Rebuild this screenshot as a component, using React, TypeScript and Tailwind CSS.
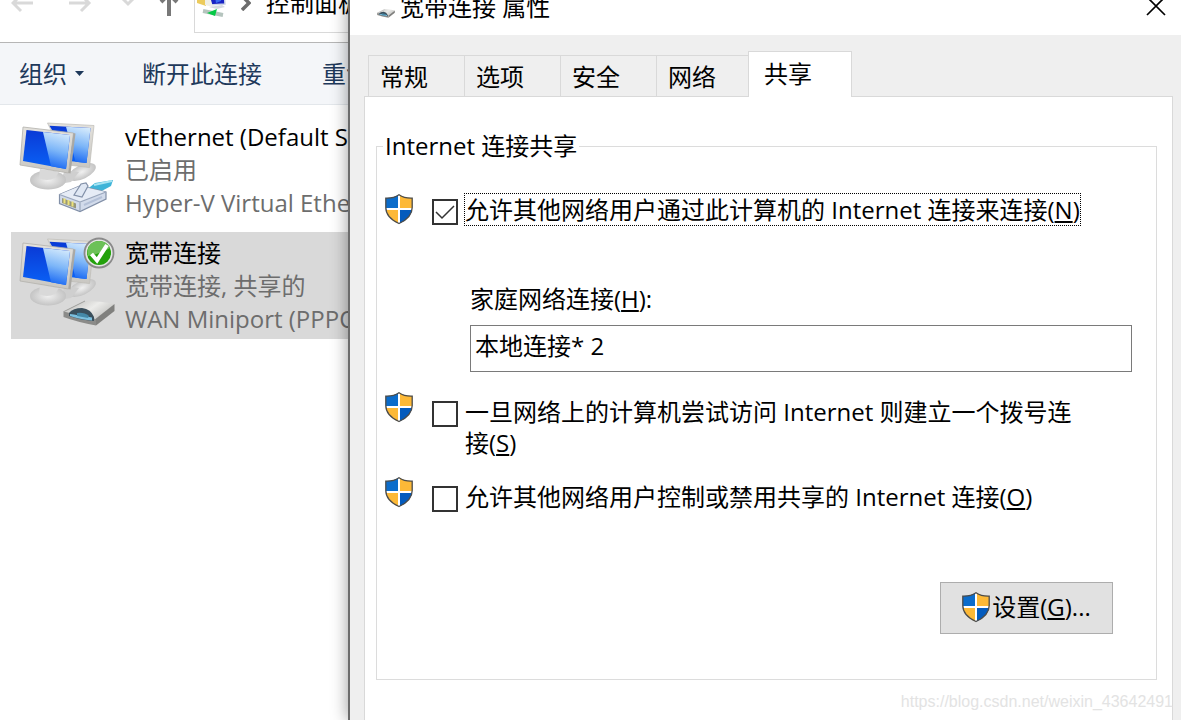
import type { ReactNode } from "react";

function Shield() {
  return (
    <svg viewBox="0 0 28 32" className="h-8 w-7 shrink-0" aria-hidden="true">
      <defs>
        <clipPath id="shield-shape">
          <path d="M14 1.5C10.500 4 5 5.200 .8 5v9.500c0 7 5 12.500 13.200 16.300 8.200-3.800 13.200-9.300 13.200-16.300V5C23 5.200 17.500 4 14 1.500z" />
        </clipPath>
      </defs>
      <g clipPath="url(#shield-shape)">
        <rect width="14" height="16" fill="#0b6ccb" />
        <rect x="14" width="14" height="16" fill="#fdb937" />
        <rect y="16" width="14" height="16" fill="#fdb937" />
        <rect x="14" y="16" width="14" height="16" fill="#045bbd" />
        <path d="M14 0v32M0 16h28" stroke="#fff" strokeWidth="2" />
      </g>
      <path
        d="M14 1.700C10.500 4.100 5 5.300 .8 5.100v9.400c0 7 5 12.300 13.200 16 8.200-3.700 13.200-9 13.200-16V5.100C23 5.300 17.500 4.100 14 1.700z"
        fill="none"
        stroke="#4c4c4a"
        strokeWidth="1.300"
      />
    </svg>
  );
}

function Monitors() {
  return (
    <>
      <defs>
        <linearGradient id="screen" x1="0" y1="0" x2="0" y2="1">
          <stop offset="0" stopColor="#0a3ad6" />
          <stop offset="1" stopColor="#0a62f6" />
        </linearGradient>
        <linearGradient id="glare" x1="0.6" y1="0" x2="0.4" y2="1">
          <stop offset="0" stopColor="#d3e9fc" />
          <stop offset="0.5" stopColor="#7db6f8" />
          <stop offset="1" stopColor="#1565f3" />
        </linearGradient>
        <linearGradient id="frame" x1="0" y1="0" x2="0" y2="1">
          <stop offset="0" stopColor="#e4e2dd" />
          <stop offset="1" stopColor="#c9c7c2" />
        </linearGradient>
        <radialGradient id="foot">
          <stop offset="0" stopColor="#f0f0f0" />
          <stop offset="1" stopColor="#c4c4c4" />
        </radialGradient>
      </defs>
      <ellipse cx="63" cy="52" rx="15" ry="7" fill="url(#foot)" transform="rotate(-26 63 52)" />
      <path d="M46 50l14 2-8 10-12 2z" fill="#cfcfcf" />
      <path d="M28.500 3l46.500 2.500-4.500 42L49 45z" fill="url(#frame)" stroke="#bdbbb6" strokeWidth="0.700" />
      <path d="M30.500 5.800L71.500 8l-4 35-17-2z" fill="url(#screen)" />
      <path d="M47 6.700L71.500 8l-4 35-11-1.300z" fill="url(#glare)" />
      <ellipse cx="29" cy="60" rx="18" ry="9.500" fill="url(#foot)" />
      <path d="M21 49l19 3-4 6q-8 4-16 0z" fill="#d9d9d9" />
      <path d="M4 7l50.500 6L49.500 53 1 45z" fill="url(#frame)" stroke="#b3b1ac" strokeWidth="0.800" />
      <path d="M54.500 13l2 .5-5 40-2-.5z" fill="#aaa8a3" />
      <path d="M7.500 10L51 15l-4 34-43-8z" fill="url(#screen)" />
      <path d="M24 11.900L51 15l-4 34-15-2.800z" fill="url(#glare)" />
    </>
  );
}

function EthernetIcon() {
  return (
    <svg viewBox="0 0 96 96" className="h-24 w-24 shrink-0" aria-hidden="true">
      <Monitors />
      <path d="M66 71l10-8 18-3-2 6-13 7-8 1z" fill="#3fb4d8" />
      <path d="M75 65l18-4" stroke="#a8e4f2" strokeWidth="2" />
      <path d="M40.500 74.500L61 66l26 6v7L61 91.500l-20.500-8z" fill="#d2dbeb" stroke="#8290a8" strokeWidth="1.200" />
      <path d="M40.500 74.500L61 66l26 6-26 11z" fill="#e6ecf6" />
      <path d="M40.500 74.500L61 82l26-10M61 82v9" fill="none" stroke="#9aa7bd" strokeWidth="1.200" />
      <path d="M55 75l7-11 5-1 2 3-6 11z" fill="#dfe7f3" stroke="#8290a8" strokeWidth="1.200" />
      <path d="M43 78l14 5.500v5L43 83z" fill="#98987c" />
      <path d="M45.500 78.500v5M49.500 80v5M53.500 81.500v5" stroke="#ece27a" strokeWidth="2" />
      <path d="M65 85l18-8" stroke="#b4c1d8" strokeWidth="2" />
    </svg>
  );
}

function ModemShape() {
  return (
    <>
      <defs>
        <linearGradient id="modem-top" x1="0" y1="0" x2="1" y2="0.500">
          <stop offset="0" stopColor="#b4b4b2" />
          <stop offset="0.600" stopColor="#ececea" />
          <stop offset="1" stopColor="#c4c4c2" />
        </linearGradient>
      </defs>
      <path d="M.5 11L33 18v7.500Q14 22 .5 17z" fill="#8b8b89" />
      <path d="M.5 11.500L22 1q16 0 29.500 3L33 19z" fill="url(#modem-top)" />
      <path d="M33 18.500L51.500 4v7L33 25.500z" fill="#80807e" />
      <path d="M6 13q4-5 13-5 9 1 12 9v4Q17 20 6 16z" fill="#3a4f5c" />
      <path d="M7 14q7 1 22 3.500v3Q16 19 7 16z" fill="#7cc0df" />
      <path d="M14 13q7-1 12 3l-1 2-11-2z" fill="#4589a8" />
      <path d="M1 11.500L22 1" stroke="#8f8f8d" strokeWidth="0.800" />
    </>
  );
}

function BroadbandIcon() {
  return (
    <svg viewBox="0 0 96 96" className="h-24 w-24 shrink-0" aria-hidden="true">
      <Monitors />
      <svg x="44" y="64" width="52" height="26" viewBox="0 0 52 26">
        <ModemShape />
      </svg>
      <circle cx="80" cy="17" r="14.500" fill="#e6e6e6" stroke="#8a8a8a" strokeWidth="1.800" />
      <circle cx="80" cy="17" r="12" fill="#23a10c" />
      <path d="M68.500 14a12 12 0 0 1 22.500-2q-8 5-22 8-1-3-.5-6z" fill="#6cc158" />
      <path d="M72.500 18l5.500 6.500L88 9" fill="none" stroke="#fff" strokeWidth="4" />
    </svg>
  );
}

function NavBar() {
  return (
    <div className="-mt-[36px] flex h-[79px] shrink-0 items-center border-b border-[#b6b6b6] bg-white">
      <button aria-label="后退" className="ml-[11px] w-6 text-[#d9d9d9]">
        <svg viewBox="0 0 24 20" className="h-5 w-6" fill="none" stroke="currentColor" strokeWidth="3">
          <path d="M22 10H2M10 2l-8 8 8 8" />
        </svg>
      </button>
      <button aria-label="前进" className="ml-[33px] w-6 text-[#d9d9d9]">
        <svg viewBox="0 0 24 20" className="h-5 w-6" fill="none" stroke="currentColor" strokeWidth="3">
          <path d="M1 10h20M13 2l8 8-8 8" />
        </svg>
      </button>
      <button aria-label="最近浏览的位置" className="ml-[29px] w-[14px] text-[#d9d9d9]">
        <svg viewBox="0 0 14 10" className="h-[10px] w-[14px]" fill="none" stroke="currentColor" strokeWidth="3">
          <path d="M2 1l5 5 5-5" />
        </svg>
      </button>
      <button aria-label="上移" className="ml-6 w-[20px] text-[#787878]">
        <svg viewBox="0 0 20 26" className="h-[26px] w-[20px]" fill="none" stroke="currentColor" strokeWidth="4">
          <path d="M10 26V4M2 12l8-8 8 8" />
        </svg>
      </button>
      <div className="ml-[15px] flex h-[60px] w-[400px] shrink-0 items-center border border-[#d9d9d9] pl-[2px]">
        <svg viewBox="0 0 30 30" className="h-[30px] w-[30px] shrink-0" aria-hidden="true">
          <path d="M10 2h17l1 14-15 1z" fill="#1823c4" stroke="#cdd5e6" strokeWidth="1.500" />
          <path d="M17 2l9 1-2 10-5 2z" fill="#3b6bf0" />
          <path d="M0 6l9 3v9l-9-3z" fill="#eccb5c" />
          <path d="M8 10l6 2 2 7-8-2z" fill="#efefe6" />
          <path d="M12 19l13-2 3 2-8 2z" fill="#d5dae0" />
          <path d="M6 23l20 4" stroke="#b5c4be" strokeWidth="4" />
          <path d="M10 25l10-4-2 7z" fill="#05c946" />
        </svg>
        <svg viewBox="0 0 10 16" className="ml-[14px] h-4 w-[10px]" fill="none" stroke="#6d6d6d" strokeWidth="3.500">
          <path d="M1 1l7 7-7 7" />
        </svg>
        <span className="ml-[15px] whitespace-nowrap leading-8">控制面板</span>
      </div>
    </div>
  );
}

function CommandBar() {
  return (
    <div className="flex h-[62px] shrink-0 items-center whitespace-nowrap border-b border-[#e3e7eb] bg-[#f4f6f9] pl-[19px] text-[#1e395b]">
      <button className="flex items-center gap-2">
        组织
        <svg viewBox="0 0 9 5" className="h-[5px] w-[9px]" fill="currentColor" aria-hidden="true">
          <path d="M0 0h9L4.500 5z" />
        </svg>
      </button>
      <button className="ml-[58px]">断开此连接</button>
      <button className="ml-[60px]">重命名此连接</button>
    </div>
  );
}

type ConnectionProps = { icon: ReactNode; name: string; status: string; device: string; selected?: boolean };

function Connection({ icon, name, status, device, selected }: ConnectionProps) {
  return (
    <li className={`flex h-[107px] gap-[10px] pl-2 pt-1 ${selected ? "bg-[#d9d9d9]" : ""}`}>
      {icon}
      <div className="whitespace-nowrap leading-[33px] text-[#6d6d6d]">
        <p className="text-black">{name}</p>
        <p>{status}</p>
        <p>{device}</p>
      </div>
    </li>
  );
}

const tabs = ["常规", "选项", "安全", "网络"];

type OptionProps = { id: string; checked?: boolean; focused?: boolean; hotkey: string; children: ReactNode };

function Option({ id, checked, focused, hotkey, children }: OptionProps) {
  return (
    <div className="flex items-start pl-2 pr-16">
      <Shield />
      <div className={`ml-[19px] flex items-start gap-[6px] ${focused ? "" : "pt-1"}`}>
        <span className="mt-[6px] grid shrink-0">
          <input
            id={id}
            type="checkbox"
            defaultChecked={checked}
            className="peer col-start-1 row-start-1 h-[26px] w-[26px] appearance-none border-2 border-[#333] bg-white"
          />
          <svg
            viewBox="0 0 26 26"
            className="pointer-events-none invisible col-start-1 row-start-1 h-[26px] w-[26px] peer-checked:visible"
            fill="none"
            stroke="#333"
            strokeWidth="1.500"
            aria-hidden="true"
          >
            <path d="M4 13l6 6L22 7" />
          </svg>
        </span>
        <label
          htmlFor={id}
          className={`border leading-[31px] ${focused ? "whitespace-nowrap border-dotted border-black" : "border-transparent"}`}
        >
          {children}(<u className="underline-offset-2">{hotkey}</u>)
        </label>
      </div>
    </div>
  );
}

function PropertiesDialog() {
  return (
    <section className="relative z-10 flex min-w-0 flex-1 flex-col border-l-2 border-[#6b6b6b] bg-[#efefef] shadow-[0_0_16px_rgba(0,0,0,0.4)]">
      <header className="-mt-[21px] flex h-[56px] shrink-0 items-center bg-white pl-[27px] pr-[14px]">
        <svg viewBox="0 0 52 26" className="mt-3 h-[9px] w-[18px]" aria-hidden="true">
          <ModemShape />
        </svg>
        <h1 className="ml-[5px] flex-1 leading-8">宽带连接 属性</h1>
        <button aria-label="关闭">
          <svg viewBox="0 0 22 22" className="h-[22px] w-[22px]" fill="none" stroke="#000" strokeWidth="1.700">
            <path d="M2 1l18 18M20 1L2 19" />
          </svg>
        </button>
      </header>
      <div role="tablist" className="z-10 -mb-px ml-[18px] mt-4 flex h-[46px] shrink-0 items-end">
        {tabs.map((tab) => (
          <button
            key={tab}
            role="tab"
            aria-selected="false"
            className="h-[42px] w-24 border-b border-l border-t border-[#d9d9d9] pl-[11px] pt-[2px] text-left"
          >
            {tab}
          </button>
        ))}
        <div className="-ml-1 h-[46px] w-[104px] border-x border-t border-[#d9d9d9] bg-white">
          <button role="tab" aria-selected="true" className="h-full w-full pb-[2px] pl-[15px] text-left">
            共享
          </button>
        </div>
      </div>
      <main className="ml-[14px] mr-2 flex-1 border-x border-t border-[#d9d9d9] bg-white pl-[11px] pr-[15px] pt-[33px]">
        <fieldset className="border border-[#dcdcdc] pb-[45px]">
          <legend className="ml-[6px] px-[2px] leading-8">Internet 连接共享</legend>
          <div className="pt-[31px]">
            <Option id="share" checked focused hotkey="N">
              允许其他网络用户通过此计算机的 Internet 连接来连接
            </Option>
          </div>
          <div className="ml-[93px] mr-6 mt-[57px]">
            <label htmlFor="home" className="block leading-8">
              家庭网络连接(<u className="underline-offset-2">H</u>):
            </label>
            <input
              id="home"
              type="text"
              readOnly
              value="本地连接* 2"
              className="mt-[10px] block h-[47px] w-full border border-[#7a7a7a] bg-white pb-2 pl-1 outline-none"
            />
          </div>
          <div className="mt-[19px] flex flex-col gap-[17px]">
            <Option id="dial" hotkey="S">
              一旦网络上的计算机尝试访问 Internet 则建立一个拨号连接
            </Option>
            <Option id="control" hotkey="O">
              允许其他网络用户控制或禁用共享的 Internet 连接
            </Option>
          </div>
          <div className="mr-[43px] mt-[69px] flex justify-end">
            <button className="flex h-[52px] w-[173px] items-center justify-center gap-[2px] border border-[#adadad] bg-[#e1e1e1] pb-[2px]">
              <Shield />
              <span>
                设置(<u className="underline-offset-2">G</u>)...
              </span>
            </button>
          </div>
        </fieldset>
      </main>
      <p className="absolute bottom-2 right-2 font-['Liberation_Sans',sans-serif] text-base leading-5 text-[#e3e3e3]">
        https://blog.csdn.net/weixin_43642491
      </p>
    </section>
  );
}

export default function App() {
  return (
    <div className="flex h-screen overflow-hidden bg-white font-['Open_Sans','Noto_Sans_CJK_SC',sans-serif] text-2xl text-black">
      <section className="flex w-[348px] shrink-0 flex-col overflow-hidden">
        <NavBar />
        <CommandBar />
        <ul className="ml-[11px] mt-[11px] flex flex-col gap-[9px]">
          <Connection
            icon={<EthernetIcon />}
            name="vEthernet (Default Switch)"
            status="已启用"
            device="Hyper-V Virtual Ethernet Adapter"
          />
          <Connection
            icon={<BroadbandIcon />}
            name="宽带连接"
            status="宽带连接, 共享的"
            device="WAN Miniport (PPPOE)"
            selected
          />
        </ul>
      </section>
      <PropertiesDialog />
    </div>
  );
}
